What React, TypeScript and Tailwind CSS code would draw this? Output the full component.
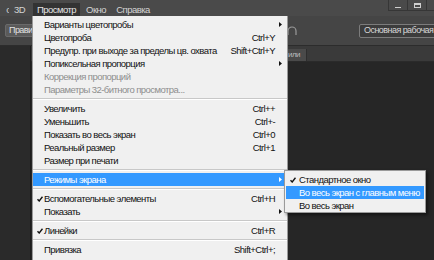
import React from "react";

/**
 * Photoshop "Просмотр" menu open, with the "Режимы экрана" submenu.
 * Background chrome (menubar, options bar, tab bar, workspace) is laid out in flow;
 * the dropdown and submenu float over it.
 */

type MenuItem =
  | "sep"
  | {
      label: string;
      shortcut?: string;
      sub?: boolean;
      checked?: boolean;
      disabled?: boolean;
      active?: boolean;
    };

const VIEW_MENU: MenuItem[] = [
  { label: "Варианты цветопробы", sub: true },
  { label: "Цветопроба", shortcut: "Ctrl+Y" },
  { label: "Предупр. при выходе за пределы цв. охвата", shortcut: "Shift+Ctrl+Y" },
  { label: "Попиксельная пропорция", sub: true },
  { label: "Коррекция пропорций", disabled: true },
  { label: "Параметры 32-битного просмотра...", disabled: true },
  "sep",
  { label: "Увеличить", shortcut: "Ctrl++" },
  { label: "Уменьшить", shortcut: "Ctrl+-" },
  { label: "Показать во весь экран", shortcut: "Ctrl+0" },
  { label: "Реальный размер", shortcut: "Ctrl+1" },
  { label: "Размер при печати" },
  "sep",
  { label: "Режимы экрана", sub: true, active: true },
  "sep",
  { label: "Вспомогательные элементы", shortcut: "Ctrl+H", checked: true },
  { label: "Показать", sub: true },
  "sep",
  { label: "Линейки", shortcut: "Ctrl+R", checked: true },
  "sep",
  { label: "Привязка", shortcut: "Shift+Ctrl+;" },
  { label: "Привязать к", sub: true },
];

const SCREEN_MODES = [
  { label: "Стандартное окно", checked: true },
  { label: "Во весь экран с главным меню", active: true },
  { label: "Во весь экран" },
];

function Check({ white }: { white?: boolean }) {
  return (
    <svg width="6" height="6" viewBox="0 0 6 6" className={white ? "text-white" : "text-[#111]"}>
      <path d="M0.5 3.2 L2.2 5 L5.5 0.8" fill="none" stroke="currentColor" strokeWidth="1.4" />
    </svg>
  );
}

function Arrow({ white }: { white?: boolean }) {
  return (
    <svg width="3" height="5" viewBox="0 0 3 5" className={white ? "text-white" : "text-[#111]"}>
      <path d="M0 0 L3 2.5 L0 5 Z" fill="currentColor" />
    </svg>
  );
}

function MenuRow({ item }: { item: Exclude<MenuItem, "sep"> }) {
  const textClass = item.active
    ? "text-white"
    : item.disabled
      ? "text-[#8e8e8e]"
      : "text-[#111]";
  return (
    <div className={`h-[13px] flex items-center pr-[4px] ${item.active ? "bg-[#3399ff]" : ""} ${textClass}`}>
      <div className="w-[11px] shrink-0 pl-[4px] flex items-center">{item.checked && <Check white={item.active} />}</div>
      <div className="flex-1 whitespace-nowrap leading-none">{item.label}</div>
      <div className="shrink-0 whitespace-nowrap leading-none">{item.shortcut}</div>
      <div className="w-[8px] shrink-0 pl-[4px] flex items-center">{item.sub && <Arrow white={item.active} />}</div>
    </div>
  );
}

function Separator() {
  return (
    <div className="h-[6px] flex flex-col justify-center">
      <div className="h-px bg-[#c8c8c8]" />
      <div className="h-px bg-white" />
    </div>
  );
}

export default function App() {
  return (
    <div className="relative w-[434px] h-[260px] overflow-hidden bg-[#272727] flex flex-col font-['Liberation_Sans',Arial,sans-serif] text-[9.5px] tracking-[-0.55px]">
      {/* Menubar */}
      <div className="h-[16px] shrink-0 bg-[#4a4a4a] flex text-[#d4d4d4]">
        <div className="w-[9px] flex items-end justify-end pb-[2px] overflow-hidden">
          <span className="leading-none -mr-[2px]">о</span>
        </div>
        <div className="w-[21px] flex items-end justify-center pb-[2px]">
          <span className="leading-none">3D</span>
        </div>
        <div className="ml-[3px] w-[47px] mt-[3px] bg-[#333333] flex items-end justify-center pb-[2px]">
          <span className="leading-none text-[#e4e4e4]">Просмотр</span>
        </div>
        <div className="w-[32px] flex items-end justify-center pb-[2px]">
          <span className="leading-none">Окно</span>
        </div>
        <div className="w-[42px] flex items-end justify-center pb-[2px]">
          <span className="leading-none">Справка</span>
        </div>
        <div className="ml-auto mr-[-6px] flex self-start">
          <div className="w-[20px] h-[11px] border border-[#363636] border-t-0 flex items-end justify-center pb-[2px]">
            <div className="w-[6px] h-px bg-[#cfcfcf]" />
          </div>
          <div className="w-[19px] h-[11px] border border-[#363636] border-t-0 border-l-0 flex items-center justify-center">
            <div className="w-[7px] h-[5px] border border-[#cfcfcf] border-t-2" />
          </div>
          <div className="w-[13px] h-[11px] border border-[#363636] border-t-0 border-l-0" />
        </div>
      </div>

      {/* Options bar */}
      <div className="h-[30px] shrink-0 bg-[#454545] border-b border-[#2c2c2c] flex items-center">
        <div className="ml-[5px] w-[40px] h-[13px] rounded-[2px] border border-[#6a6a6a] bg-[#5a5a5a] text-[#e2e2e2] flex items-center pl-[3px] text-[9px] leading-none">
          Правила
        </div>
        <svg width="10" height="10" viewBox="0 0 10 10" className="ml-[242px] text-[#9a9a9a]">
          <path d="M1 9 V5 A4 4 0 0 1 9 5 V9" fill="none" stroke="currentColor" strokeWidth="1.2" />
        </svg>
        <div className="ml-auto w-[80px] -mr-[5px] h-[14px] rounded-[2px] border border-[#7c7c7c] bg-[#3c3c3c] text-[#d6d6d6] flex items-center pl-[4px] whitespace-nowrap overflow-hidden text-[9px] leading-none">
          Основная рабочая среда
        </div>
      </div>

      {/* Body: tools column + document tab bar + canvas */}
      <div className="flex-1 flex">
        <div className="w-[31px] bg-[#2a2a2a] border-r border-[#1c1c1c]" />
        <div className="flex-1 flex flex-col">
          <div className="h-[16px] bg-[#3a3a3a] border-b border-[#2a2a2a] flex items-end">
            <div className="ml-[240px] w-[36px] h-[12px] bg-[#4a4a4a] border-r border-[#2e2e2e] flex items-center justify-end pr-[6px] text-[8px] text-[#bdbdbd] leading-none">
              или
            </div>
          </div>
          <div className="flex-1 bg-[#262626]" />
        </div>
      </div>

      {/* Dropdown: Просмотр */}
      <div className="absolute left-[32px] top-[16px] w-[256px] h-[260px] bg-[#f0f0f0] border-l border-r border-[#9a9a9a] pt-[2px]">
        {VIEW_MENU.map((item, i) => (item === "sep" ? <Separator key={i} /> : <MenuRow key={i} item={item} />))}
      </div>

      {/* Submenu: Режимы экрана */}
      <div className="absolute left-[284px] top-[170px] w-[142px] h-[43px] bg-[#f0f0f0] border border-[#9a9a9a] pt-[2px] shadow-[2px_2px_3px_rgba(0,0,0,0.5)]">
        {SCREEN_MODES.map((m, i) => (
          <div
            key={i}
            className={`h-[13px] mx-[1px] flex items-center whitespace-nowrap leading-none ${m.active ? "bg-[#3399ff] text-white" : "text-[#111]"}`}
          >
            <div className="w-[13px] shrink-0 pl-[4px] flex items-center">{m.checked && <Check />}</div>
            {m.label}
          </div>
        ))}
      </div>
    </div>
  );
}
